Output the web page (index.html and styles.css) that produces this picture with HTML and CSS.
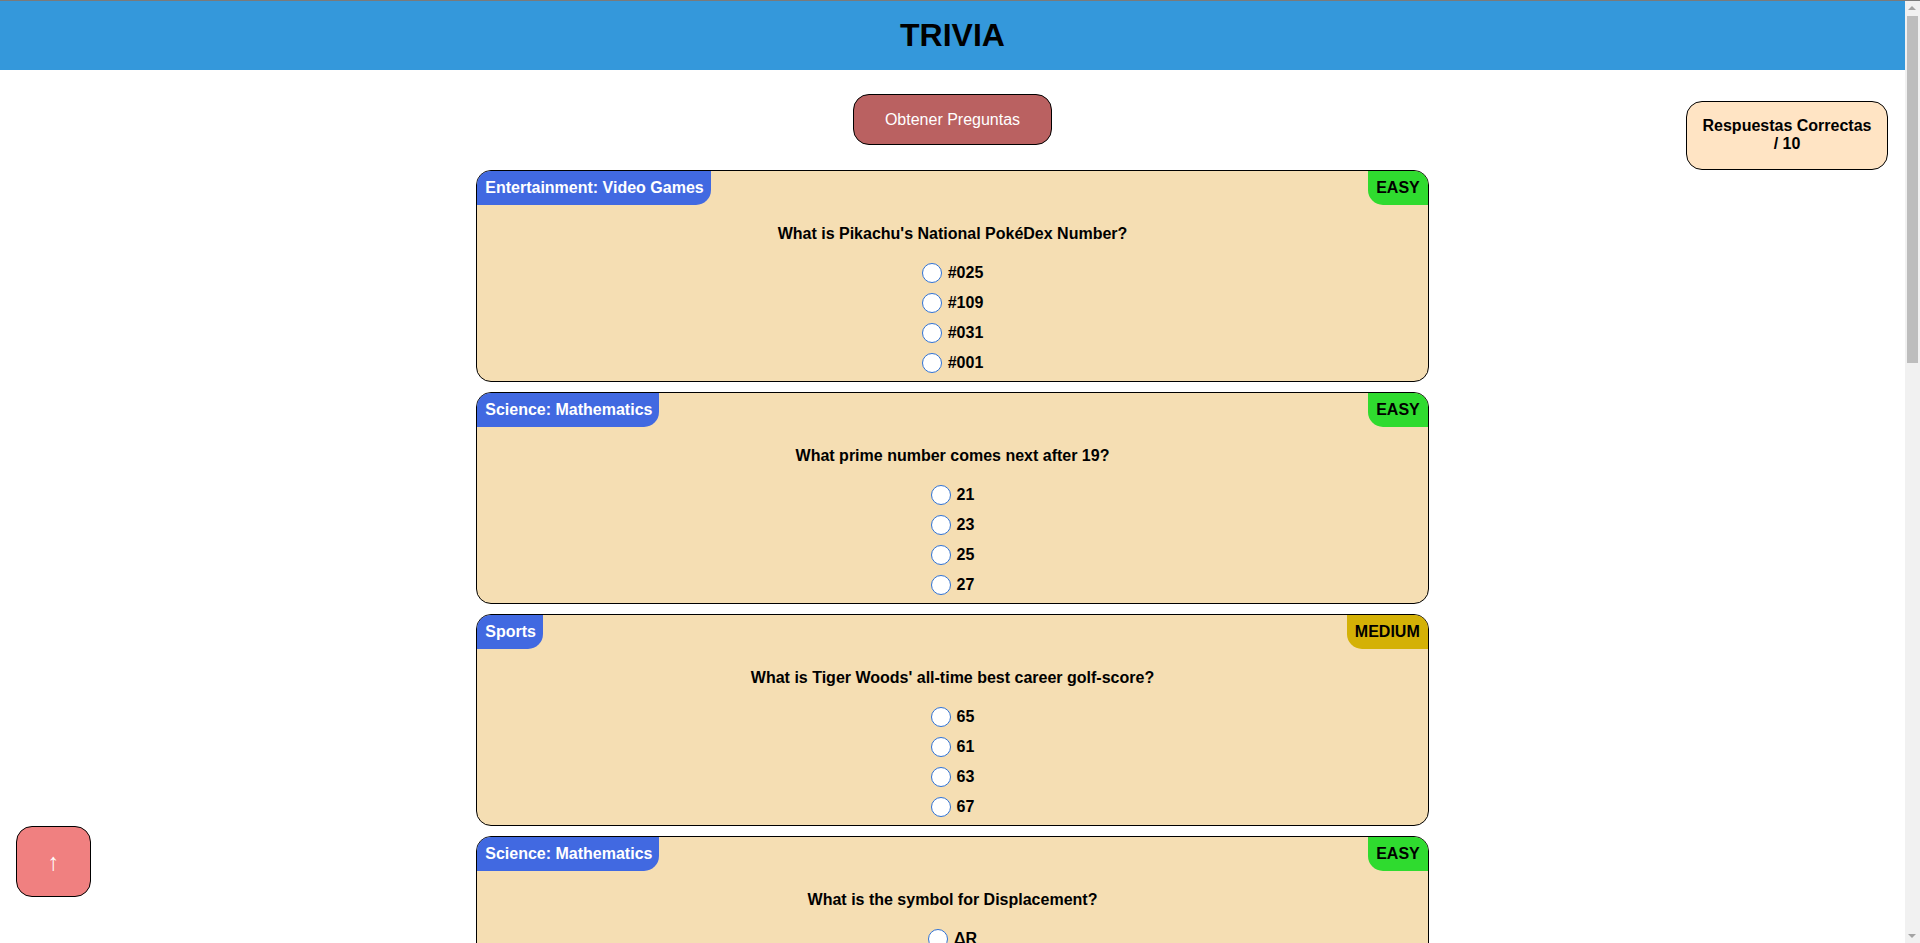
FILE: index.html
```html
<!DOCTYPE html>
<html lang="es">
<head>
<meta charset="utf-8">
<title>Trivia</title>
<link rel="stylesheet" href="styles.css">
</head>
<body>
<div class="page">
<header class="topbar"><h1 class="title">TRIVIA</h1></header>

<main class="main">
  <button class="fetch-btn" type="button">Obtener Preguntas</button>

  <section class="card">
    <div class="card-head"><span class="cat">Entertainment: Video Games</span><span class="diff easy">EASY</span></div>
    <p class="question">What is Pikachu's National PokéDex Number?</p>
    <div class="answers">
      <label class="answer"><input type="radio" name="q1" class="radio"><span>#025</span></label>
      <label class="answer"><input type="radio" name="q1" class="radio"><span>#109</span></label>
      <label class="answer"><input type="radio" name="q1" class="radio"><span>#031</span></label>
      <label class="answer"><input type="radio" name="q1" class="radio"><span>#001</span></label>
    </div>
  </section>

  <section class="card">
    <div class="card-head"><span class="cat">Science: Mathematics</span><span class="diff easy">EASY</span></div>
    <p class="question">What prime number comes next after 19?</p>
    <div class="answers">
      <label class="answer"><input type="radio" name="q2" class="radio"><span>21</span></label>
      <label class="answer"><input type="radio" name="q2" class="radio"><span>23</span></label>
      <label class="answer"><input type="radio" name="q2" class="radio"><span>25</span></label>
      <label class="answer"><input type="radio" name="q2" class="radio"><span>27</span></label>
    </div>
  </section>

  <section class="card">
    <div class="card-head"><span class="cat">Sports</span><span class="diff medium">MEDIUM</span></div>
    <p class="question">What is Tiger Woods' all-time best career golf-score?</p>
    <div class="answers">
      <label class="answer"><input type="radio" name="q3" class="radio"><span>65</span></label>
      <label class="answer"><input type="radio" name="q3" class="radio"><span>61</span></label>
      <label class="answer"><input type="radio" name="q3" class="radio"><span>63</span></label>
      <label class="answer"><input type="radio" name="q3" class="radio"><span>67</span></label>
    </div>
  </section>

  <section class="card">
    <div class="card-head"><span class="cat">Science: Mathematics</span><span class="diff easy">EASY</span></div>
    <p class="question">What is the symbol for Displacement?</p>
    <div class="answers">
      <label class="answer"><input type="radio" name="q4" class="radio"><span>ΔR</span></label>
      <label class="answer"><input type="radio" name="q4" class="radio"><span>Dp</span></label>
      <label class="answer"><input type="radio" name="q4" class="radio"><span>dr</span></label>
      <label class="answer"><input type="radio" name="q4" class="radio"><span>r</span></label>
    </div>
  </section>

  <section class="card">
    <div class="card-head"><span class="cat">Geography</span><span class="diff easy">EASY</span></div>
    <p class="question">What is the capital of Australia?</p>
    <div class="answers">
      <label class="answer"><input type="radio" name="q5" class="radio"><span>Sydney</span></label>
      <label class="answer"><input type="radio" name="q5" class="radio"><span>Canberra</span></label>
      <label class="answer"><input type="radio" name="q5" class="radio"><span>Melbourne</span></label>
      <label class="answer"><input type="radio" name="q5" class="radio"><span>Perth</span></label>
    </div>
  </section>

  <section class="card">
    <div class="card-head"><span class="cat">History</span><span class="diff medium">MEDIUM</span></div>
    <p class="question">In which year did the Berlin Wall fall?</p>
    <div class="answers">
      <label class="answer"><input type="radio" name="q6" class="radio"><span>1991</span></label>
      <label class="answer"><input type="radio" name="q6" class="radio"><span>1987</span></label>
      <label class="answer"><input type="radio" name="q6" class="radio"><span>1989</span></label>
      <label class="answer"><input type="radio" name="q6" class="radio"><span>1985</span></label>
    </div>
  </section>

  <section class="card">
    <div class="card-head"><span class="cat">Entertainment: Music</span><span class="diff easy">EASY</span></div>
    <p class="question">Which band released the album "Abbey Road"?</p>
    <div class="answers">
      <label class="answer"><input type="radio" name="q7" class="radio"><span>The Rolling Stones</span></label>
      <label class="answer"><input type="radio" name="q7" class="radio"><span>The Beatles</span></label>
      <label class="answer"><input type="radio" name="q7" class="radio"><span>Queen</span></label>
      <label class="answer"><input type="radio" name="q7" class="radio"><span>Pink Floyd</span></label>
    </div>
  </section>

  <section class="card">
    <div class="card-head"><span class="cat">Science &amp; Nature</span><span class="diff easy">EASY</span></div>
    <p class="question">What is the chemical symbol for gold?</p>
    <div class="answers">
      <label class="answer"><input type="radio" name="q8" class="radio"><span>Ag</span></label>
      <label class="answer"><input type="radio" name="q8" class="radio"><span>Go</span></label>
      <label class="answer"><input type="radio" name="q8" class="radio"><span>Au</span></label>
      <label class="answer"><input type="radio" name="q8" class="radio"><span>Gd</span></label>
    </div>
  </section>

  <section class="card">
    <div class="card-head"><span class="cat">General Knowledge</span><span class="diff medium">MEDIUM</span></div>
    <p class="question">How many sides does a heptagon have?</p>
    <div class="answers">
      <label class="answer"><input type="radio" name="q9" class="radio"><span>6</span></label>
      <label class="answer"><input type="radio" name="q9" class="radio"><span>8</span></label>
      <label class="answer"><input type="radio" name="q9" class="radio"><span>7</span></label>
      <label class="answer"><input type="radio" name="q9" class="radio"><span>9</span></label>
    </div>
  </section>

  <section class="card">
    <div class="card-head"><span class="cat">Entertainment: Film</span><span class="diff easy">EASY</span></div>
    <p class="question">Who directed the movie "Jurassic Park"?</p>
    <div class="answers">
      <label class="answer"><input type="radio" name="q10" class="radio"><span>James Cameron</span></label>
      <label class="answer"><input type="radio" name="q10" class="radio"><span>Steven Spielberg</span></label>
      <label class="answer"><input type="radio" name="q10" class="radio"><span>George Lucas</span></label>
      <label class="answer"><input type="radio" name="q10" class="radio"><span>Ridley Scott</span></label>
    </div>
  </section>
</main>
</div>

<aside class="score">Respuestas Correctas<br>/ 10</aside>
<button class="up-btn" type="button">↑</button>

<div class="scrollbar" aria-hidden="true">
  <span class="scroll-arrow up"></span>
  <span class="scroll-thumb"></span>
  <span class="scroll-arrow down"></span>
</div>
</body>
</html>
```

FILE: styles.css
```css
html, body {
  margin: 0;
  padding: 0;
}

body {
  font-family: "Liberation Sans", Arial, sans-serif;
  font-size: 16px;
  color: #000;
  background: #fff;
  border-top: 1px solid #7a7a7a;
}

.page {
  margin-right: 15px;
}

.topbar {
  height: 69px;
  background: #3498db;
  display: flex;
  align-items: center;
  justify-content: center;
}

.title {
  margin: 0;
  font-size: 32px;
  font-weight: bold;
  line-height: 37px;
}

.main {
  display: flex;
  flex-direction: column;
  align-items: center;
  padding-bottom: 100px;
}

.fetch-btn {
  margin: 24px 0 25px;
  width: 199px;
  height: 51px;
  padding: 0;
  background: #ba6161;
  color: #fff;
  border: 1px solid #000;
  border-radius: 16px;
  font-family: "Liberation Sans", Arial, sans-serif;
  font-size: 16px;
  cursor: pointer;
}

.card {
  width: 50%;
  box-sizing: border-box;
  margin-bottom: 10px;
  background: #f5deb3;
  border: 1px solid #000;
  border-radius: 15px;
  overflow: hidden;
}

.card-head {
  display: flex;
  justify-content: space-between;
  align-items: flex-start;
  height: 35px;
}

.cat,
.diff {
  display: block;
  line-height: 18px;
  height: 18px;
  font-weight: bold;
}

.cat {
  padding: 8px 7px 8px 8px;
  background: #4169e1;
  color: #fff;
  border-bottom-right-radius: 15px;
}

.diff {
  color: #000;
  padding: 8px 8px 8px 8px;
  border-bottom-left-radius: 15px;
}

.easy {
  background: #2fdb2f;
}

.medium {
  background: #d4b106;
}

.question {
  margin: 19px 0 15px;
  line-height: 18px;
  font-weight: bold;
  text-align: center;
}

.answers {
  display: flex;
  flex-direction: column;
  align-items: flex-start;
  width: max-content;
  margin: 0 auto;
  padding-bottom: 3px;
}

.answer {
  display: flex;
  align-items: center;
  gap: 6px;
  height: 30px;
  font-weight: bold;
  cursor: pointer;
}

.radio {
  appearance: none;
  -webkit-appearance: none;
  margin: 0;
  width: 20px;
  height: 20px;
  box-sizing: border-box;
  border: 1.5px solid #2f72d6;
  border-radius: 50%;
  background: #fff;
}

.radio:checked {
  background: radial-gradient(circle, #2f72d6 0 5px, #fff 5.5px);
}

.score {
  position: fixed;
  top: 101px;
  right: 32px;
  width: 202px;
  height: 69px;
  box-sizing: border-box;
  padding: 15px 8px;
  background: #ffe4c4;
  border: 1px solid #000;
  border-radius: 16px;
  text-align: center;
  font-weight: bold;
  line-height: 18px;
}

.up-btn {
  position: fixed;
  left: 16px;
  bottom: 46px;
  width: 75px;
  height: 71px;
  padding: 0;
  background: #f08080;
  color: #fff;
  border: 1px solid #000;
  border-radius: 16px;
  font-family: "Liberation Sans", Arial, sans-serif;
  font-size: 24px;
  cursor: pointer;
}

.scrollbar {
  position: fixed;
  top: 1px;
  right: 0;
  bottom: 0;
  width: 15px;
  background: #f1f1f1;
}

.scroll-thumb {
  position: absolute;
  top: 15px;
  left: 2px;
  width: 11px;
  height: 347px;
  background: #bdbdbd;
}

.scroll-arrow {
  position: absolute;
  left: 3px;
  width: 0;
  height: 0;
  border-left: 4.5px solid transparent;
  border-right: 4.5px solid transparent;
}

.scroll-arrow.up {
  top: 5px;
  border-bottom: 4.5px solid #a3a3a3;
}

.scroll-arrow.down {
  bottom: 5px;
  border-top: 4.5px solid #a3a3a3;
}
```
